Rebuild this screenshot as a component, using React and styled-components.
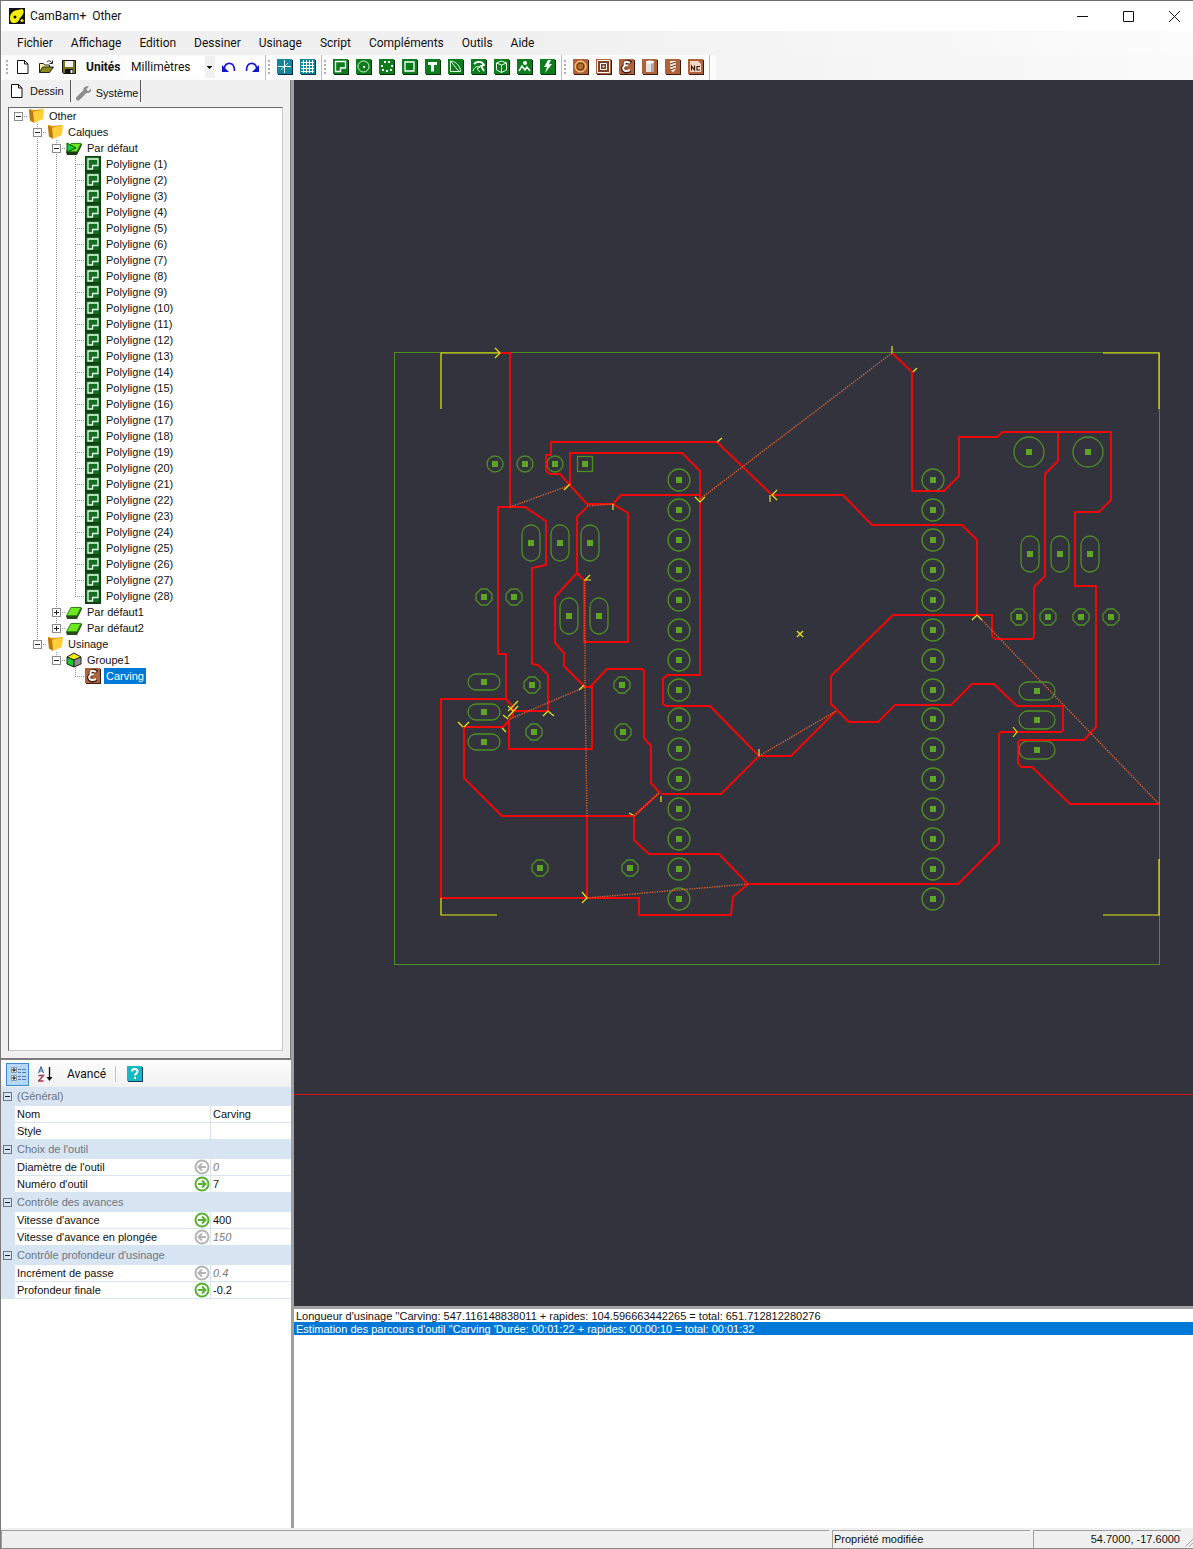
import { useState } from 'react';
import styled, { createGlobalStyle, css } from 'styled-components';

const MENU = ['Fichier', 'Affichage', 'Edition', 'Dessiner', 'Usinage', 'Script', 'Compléments', 'Outils', 'Aide'];

const VIEW_TOOLS = [
  { icon: 'axes', label: 'Axes' },
  { icon: 'grid', label: 'Grille' },
];

const DRAW_TOOLS = [
  { icon: 'polyline', label: 'Polyligne' },
  { icon: 'circle', label: 'Cercle' },
  { icon: 'points', label: 'Points' },
  { icon: 'rect', label: 'Rectangle' },
  { icon: 'text', label: 'Texte' },
  { icon: 'arc', label: 'Arc' },
  { icon: 'surface', label: 'Surface' },
  { icon: 'solid', label: 'Solide' },
  { icon: 'bitmap', label: 'Image' },
  { icon: 'script', label: 'Objet script' },
];

const CAM_TOOLS = [
  { icon: 'profile', label: 'Contour' },
  { icon: 'pocket', label: 'Poche' },
  { icon: 'engrave', label: 'Gravure' },
  { icon: 'lathe', label: 'Tour' },
  { icon: 'drill', label: 'Perçage' },
  { icon: 'nc', label: 'Fichier NC' },
];

// guides: one letter for each column, v = line, t = tee, l = elbow, h = stub, . = empty
const TREE = [
  { guides: 'h', open: true, icon: 'folder', label: 'Other' },
  { guides: '.t', open: true, icon: 'folder', label: 'Calques' },
  { guides: '.vt', open: true, icon: 'layerActive', label: 'Par défaut' },
  ...Array.from({ length: 28 }, (_, i) => ({
    guides: i === 27 ? '.vvl' : '.vvt',
    icon: 'polyTree',
    label: `Polyligne (${i + 1})`,
  })),
  { guides: '.vt', open: false, icon: 'layer', label: 'Par défaut1' },
  { guides: '.vl', open: false, icon: 'layer', label: 'Par défaut2' },
  { guides: '.l', open: true, icon: 'folder', label: 'Usinage' },
  { guides: '..l', open: true, icon: 'part', label: 'Groupe1' },
  { guides: '...l', icon: 'engrave', label: 'Carving' },
];

const PROPERTIES = [
  {
    title: '(Général)',
    rows: [
      { id: 'nom', name: 'Nom', value: 'Carving' },
      { id: 'style', name: 'Style', value: '' },
    ],
  },
  {
    title: "Choix de l'outil",
    rows: [
      { id: 'diametre', name: "Diamètre de l'outil", value: '0', state: 'default' },
      { id: 'numero', name: "Numéro d'outil", value: '7', state: 'set' },
    ],
  },
  {
    title: 'Contrôle des avances',
    rows: [
      { id: 'avance', name: "Vitesse d'avance", value: '400', state: 'set' },
      { id: 'plongee', name: "Vitesse d'avance en plongée", value: '150', state: 'default' },
    ],
  },
  {
    title: "Contrôle profondeur d'usinage",
    rows: [
      { id: 'increment', name: 'Incrément de passe', value: '0.4', state: 'default' },
      { id: 'profondeur', name: 'Profondeur finale', value: '-0.2', state: 'set' },
    ],
  },
];

const LOG = [
  "Longueur d'usinage ''Carving: 547.116148838011 + rapides: 104.596663442265 = total: 651.712812280276",
  "Estimation des parcours d'outil ''Carving 'Durée: 00:01:22 + rapides: 00:00:10 = total: 00:01:32",
];

const TRACES = [
  '499,353 510,353 510,507',
  '513,711 548,711 548,675 538,665 532,664 532,568 546,565 546,521 525,507 498,507 498,654 506,654 506,699 513,707 513,716 503,727 464,727 464,778 502,816 634,816 659,793',
  '506,699 441,699 441,898 639,898 639,915 731,915 733,897 748,884 958,884 999,843 999,734 1001,732 1061,732 1063,730 1063,706 1017,706 994,684 972,684 951,705 895,705 878,722 849,722 831,704 831,676 893,615 992,615 992,636 995,639 1032,639 1034,637 1034,587 1045,576 1045,474 1058,461 1058,432',
  '748,884 719,854 649,854 634,840 634,816',
  '661,794 721,794 759,756 791,756 836,711',
  '509,720 509,749 592,749 592,687 585,687 564,666 564,653 555,643 555,597 577,573 577,517 587,507',
  '590,687 607,669 642,669 644,671 644,738 651,746 651,783 660,793',
  '577,573 584,580 584,642 628,642 628,513 613,504 587,504',
  '613,504 621,495 700,495',
  '587,504 560,474 550,474 546,471 546,455 551,455 551,442 717,442 772,495 843,495 872,525 962,525 977,540 977,615',
  '570,486 570,453 682,453 700,471 700,675 667,675 663,679 663,704 666,706 710,706 759,756',
  '587,816 587,898',
  '892,353 912,372 912,491 944,491 959,476 959,437 997,437 1003,432 1111,432 1111,500 1099,512 1075,512 1075,586 1096,586 1096,727 1084,740 1020,740 1018,742 1018,763 1021,767 1032,767 1070,804 1159,804',
];

const RAPIDS = [
  '510,507 568,486',
  '587,506 613,504',
  '700,499 892,353',
  '585,580 585,687 587,816',
  '510,719 585,687',
  '759,756 836,711',
  '977,615 1159,804',
  '587,898 748,884',
  '634,816 659,793',
];

const ARROWS = [
  '495,348 500,353 495,358',
  '717,442 722,438',
  '892,346 892,353',
  '913,372 917,368',
  '564,490 570,484',
  '695,497 700,502 705,497',
  '613,504 613,510',
  '590,575 585,580 591,580',
  '770,495 770,502',
  '777,490 772,495 777,500',
  '797,631 803,637',
  '797,637 803,631',
  '759,749 759,756',
  '972,620 977,615 982,620',
  '1013,727 1017,732 1013,737',
  '579,690 584,685',
  '458,722 463,727',
  '464,727 469,722',
  '502,728 506,732',
  '503,715 508,719',
  '518,701 508,711',
  '518,706 508,717',
  '508,706 513,711',
  '543,716 548,711 554,716',
  '629,813 633,815',
  '661,796 661,802',
  '582,892 587,898 582,903',
];

const CORNERS = ['441,409 441,353 499,353', '1103,353 1159,353 1159,409', '1159,859 1159,915 1103,915', '441,898 441,915 497,915'];

const PIN_ROWS = [480, 510, 540, 570, 600, 630, 660, 690, 719, 749, 779, 809, 839, 869, 899];

const PADS = [
  ...PIN_ROWS.flatMap((y) => [[679, y, 22, 22], [933, y, 22, 22]]),
  [1029, 452, 30, 30], [1088, 452, 30, 30],
  [495, 464, 16, 16], [525, 464, 16, 16], [555, 464, 16, 16],
  [531, 543, 18, 36], [560, 543, 18, 36], [590, 543, 18, 36],
  [569, 616, 18, 36], [599, 616, 18, 36],
  [1030, 554, 18, 36], [1060, 554, 18, 36], [1090, 554, 18, 36],
  [484, 682, 32, 16], [484, 712, 32, 16], [484, 742, 32, 16],
  [1037, 691, 36, 18], [1037, 720, 36, 18], [1037, 750, 36, 18],
];

const OCTAGONS = [
  [484, 597], [514, 597], [532, 685], [622, 685], [534, 732], [623, 732],
  [540, 868], [630, 868], [1019, 617], [1048, 617], [1081, 617], [1111, 617],
];

const green = (
  <>
    <path d="M1 1h15v15H1z" fill="#062e0c" />
    <path d="M0 0h15v15H0z" fill="#0d7c1c" />
  </>
);

const copper = (
  <>
    <path d="M1 1h15v15H1z" fill="#3b1a10" />
    <path d="M0 0h15v15H0z" fill="#b0623a" />
  </>
);

const teal = (
  <>
    <path d="M1 1h15v15H1z" fill="#0b2a4c" />
    <path d="M0 0h15v15H0z" fill="#11859b" />
  </>
);

const ICONS = {
  app: (
    <>
      <path d="M0 0h16v16H0z" fill="#111" />
      <path d="M1 10C1 6 4 2 9 2l4-1c2 1 2 3 1 5-1 2-2 3-3 4-1 3-3 5-6 5s-4-2-4-5z" fill="#f4ee00" />
      <circle cx="6" cy="9" r="1.5" fill="#111" />
      <circle cx="13" cy="12.500" r="1.500" fill="#f4ee00" />
    </>
  ),
  page: <path d="M2.500 1.500h7l3.500 3.500v9.500H2.500zM9.500 1.500v3.500h3.500" fill="#fff" stroke="#111" />,
  open: (
    <>
      <path d="M1.500 13.500v-9h4l1 1.500h5v2" fill="#ffffb0" stroke="#222" />
      <path d="M1.500 13.500l3-5.500h11l-4 5.500z" fill="#8a8a1c" stroke="#222" />
      <path d="M9 3c2-2 4-1 5 1m.5-2.500v3h-3" fill="none" stroke="#222" />
    </>
  ),
  save: (
    <>
      <path d="M1.500 1.500h13v13h-12l-1-1z" fill="#77771a" stroke="#111" />
      <path d="M4 2h8v6H4z" fill="#f0f0f0" />
      <path d="M4 10h8v4.500H4z" fill="#111" />
      <path d="M9.500 11h2v3h-2z" fill="#f0f0f0" />
    </>
  ),
  undo: (
    <>
      <path d="M3 10c1-5 4-6 6.500-5.500 3 .5 4 3 4 7.500" fill="none" stroke="#1414c8" strokeWidth="1.600" />
      <path d="M1 6v7h7z" fill="#1414c8" />
    </>
  ),
  redo: (
    <>
      <path d="M13 10c-1-5-4-6-6.500-5.500-3 .5-4 3-4 7.500" fill="none" stroke="#1414c8" strokeWidth="1.600" />
      <path d="M15 6v7H8z" fill="#1414c8" />
    </>
  ),
  axes: (
    <>
      {teal}
      <path d="M7.500 1v13M1 7.500h13" stroke="#fff" />
      <path d="M4 11l7-7" stroke="#9fe6f0" />
    </>
  ),
  grid: (
    <>
      {teal}
      <path d="M3.500 1v13M6.500 1v13M9.500 1v13M12.500 1v13M1 3.500h13M1 6.500h13M1 9.500h13M1 12.500h13" stroke="#fff" />
    </>
  ),
  polyline: (
    <>
      {green}
      <path d="M2.500 2.500h10v6.500h-5v3.500h-5z" fill="none" stroke="#fff" strokeWidth="1.300" />
    </>
  ),
  polyTree: (
    <>
      <path d="M0 0h16v16H0z" fill="#0c4416" />
      <path d="M1 1h13v13H1z" fill="#146e22" />
      <path d="M3 3h10v6.500H7.500V13H3z" fill="none" stroke="#eaffea" strokeWidth="1.300" />
    </>
  ),
  circle: (
    <>
      {green}
      <circle cx="7.500" cy="7.500" r="5.500" fill="none" stroke="#d8f5d8" />
      <path d="M7 7h2v2H7z" fill="#fff" />
    </>
  ),
  points: (
    <>
      {green}
      <path d="M5 2h2v2H5zM9 2h2v2H9zM2 6h2v2H2zM12 6h2v2h-2zM3 10h2v2H3zM7 11h2v2H7zM11 10h2v2h-2z" fill="#fff" />
    </>
  ),
  rect: (
    <>
      {green}
      <path d="M3 3h9v9H3z" fill="none" stroke="#fff" strokeWidth="1.300" />
    </>
  ),
  text: (
    <>
      {green}
      <path d="M3 3h9v3H9v6.500H6V6H3z" fill="#fff" />
    </>
  ),
  arc: (
    <>
      {green}
      <path d="M2.500 2v10.500h10c0-5-4-10-10-10.500l8 10" fill="none" stroke="#d8f5d8" />
    </>
  ),
  surface: (
    <>
      {green}
      <path d="M3 5c3-3 8-3 10 1l-3 1 3 5" fill="none" stroke="#fff" strokeWidth="1.800" />
      <path d="M2 12c1-4 4-5 7-4l-3 2 3 3" fill="none" stroke="#fff" />
    </>
  ),
  solid: (
    <>
      {green}
      <path d="M2.500 4l5-2 5 2v7l-5 2.500-5-2.500zM2.500 4l5 2 5-2M7.500 6v7.500" fill="none" stroke="#e8ffe8" />
    </>
  ),
  bitmap: (
    <>
      {green}
      <circle cx="8" cy="4" r="2" fill="#fff" />
      <path d="M2 12l3-5 3 4 2-3 3 4" fill="none" stroke="#fff" strokeWidth="1.500" />
    </>
  ),
  script: (
    <>
      {green}
      <path d="M8 1h3L9 5h3l-7 9 2-6H4z" fill="#fff" />
    </>
  ),
  profile: (
    <>
      {copper}
      <circle cx="7.500" cy="7.500" r="5.500" fill="#d9821c" stroke="#ffe2a8" />
      <circle cx="7.500" cy="7.500" r="3.500" fill="#b0703a" stroke="#5c2a12" />
    </>
  ),
  pocket: (
    <>
      {copper}
      <path d="M1.500 1.500h12v12h-12zM4.500 4.500h6v6h-6zM7 7h1v1H7z" fill="#7a4228" stroke="#fff" />
    </>
  ),
  engrave: (
    <>
      {copper}
      <path d="M12 4C9 1 4 3 6 6.500h3H6C1 9 5 15 11.500 11.500" fill="none" stroke="#3b1a10" strokeWidth="3.500" />
      <path d="M11 4C8 1.500 4 3 6 6.500h3H6C2 9 5 14 11 11" fill="none" stroke="#fff" strokeWidth="2" />
    </>
  ),
  lathe: (
    <>
      {copper}
      <path d="M4 3h8v10H4z" fill="#e4e4e4" />
      <path d="M9 3h3v10H9z" fill="#a8a8a8" />
      <ellipse cx="8" cy="3" rx="4" ry="1.500" fill="#fff" />
    </>
  ),
  drill: (
    <>
      {copper}
      <path d="M5 2h6v8l-3 3.500L5 10z" fill="#f0e4dc" />
      <path d="M5 5l6-2M5 8l6-2M5 11l6-2" stroke="#7a3a20" />
    </>
  ),
  nc: (
    <>
      {copper}
      <path d="M2 2h8l3 3v8H2z" fill="#f2d8c8" />
      <path d="M3.500 11.500V7l3 4V6.500M12 7.500H9v3.500h3" fill="none" stroke="#3b1a10" strokeWidth="1.200" />
    </>
  ),
  wrench: (
    <path
      d="M14 1.500l-2.500 2.500.5 1.500 1.500.5L16 3.500c.5 3-1.500 5-4.500 4.500l-7 7c-1 1-2.500.5-3 0s-1-2 0-3l7-7C8 2.500 10.500.5 14 1.500z"
      fill="#8d8d8d"
    />
  ),
  folder: (
    <>
      <path d="M1 1l5 1 9-1v9l-9 4-4-1z" fill="#e49a10" />
      <path d="M5 4l11-3-1 10-9 4z" fill="#ffcf3a" />
      <path d="M1 1l4 3 1 11-4-3z" fill="#b87a10" />
    </>
  ),
  layer: (
    <>
      <path d="M0 12l1 3h10l5-10-1-2z" fill="#2a4a1c" />
      <path d="M.5 11.500L5 3.500h10l-4 8z" fill="#6ce81c" stroke="#2f8a12" />
    </>
  ),
  layerActive: (
    <>
      <path d="M0 12l1 3h10l5-10-1-2z" fill="#1a3a14" />
      <path d="M.5 11.500L5 3.500h10l-4 8z" fill="#6ce81c" stroke="#2f8a12" />
      <path d="M1 3l9 5-9 4z" fill="#18d038" stroke="#064a10" />
    </>
  ),
  part: (
    <>
      <path d="M1 5l7-4 7 4-7 3z" fill="#f2ea10" stroke="#222" />
      <path d="M1 5v7l7 3V8z" fill="#18c830" stroke="#222" />
      <path d="M15 5v7l-7 3V8z" fill="#8c8c8c" stroke="#222" />
    </>
  ),
  categories: (
    <>
      <path d="M1.500 1.500h5v5h-5zM1.500 9.500h5v5h-5z" fill="#fff" stroke="#8a96a4" />
      <path d="M2 4h4M4 2v4M2 12h4M4 10v4" stroke="#111" />
      <path d="M8 3.500h3M12 3.500h4M8 6.500h3M12 6.500h4M8 10.500h3M12 10.500h4M8 13.500h3M12 13.500h4" stroke="#5a78b0" />
    </>
  ),
  sort: (
    <>
      <path d="M.5 7L3 1l2.500 6M1.500 5h3" fill="none" stroke="#3a6a9a" strokeWidth="1.200" />
      <path d="M.5 9.500h5l-5 5.500h5" fill="none" stroke="#a03a4a" strokeWidth="1.300" />
      <path d="M11.500 1v12" stroke="#111" strokeWidth="1.300" />
      <path d="M8.500 11h6l-3 4z" fill="#111" />
    </>
  ),
  help: (
    <>
      <path d="M1 1h15v15H1z" fill="#123a6a" />
      <path d="M0 0h15v15H0z" fill="#16b8c4" />
      <path d="M5 5.500c0-3.500 5.500-3.500 5.500 0 0 2-2.500 2-2.500 4" fill="none" stroke="#fff" strokeWidth="2" />
      <path d="M7 11h2v2H7z" fill="#fff" />
    </>
  ),
};

function Icon({ name }) {
  return (
    <IconSvg viewBox="0 0 16 16" aria-hidden="true">
      {ICONS[name]}
    </IconSvg>
  );
}

function StateIcon({ state }) {
  const color = state === 'set' ? '#55b030' : '#b4b4b4';
  return (
    <IconSvg viewBox="0 0 16 16" aria-hidden="true">
      <circle cx="8" cy="8" r="6.500" fill="#fff" stroke={color} strokeWidth="2" />
      <path
        d={state === 'set' ? 'M4 8h6M8 4.500L11.500 8 8 11.500' : 'M12 8H6M8 4.500L4.500 8 8 11.500'}
        fill="none"
        stroke={color}
        strokeWidth="2"
      />
    </IconSvg>
  );
}

function ToolGroup({ tools }) {
  return (
    <Group>
      <Grip />
      {tools.map((t) => (
        <ToolButton key={t.icon} aria-label={t.label}>
          <Icon name={t.icon} />
        </ToolButton>
      ))}
    </Group>
  );
}

function Drawing() {
  return (
    <Canvas viewBox="294 80 899 1226" preserveAspectRatio="xMidYMid meet" role="img" aria-label="Vue du dessin">
      <path d="M-2000 1094.500h6000" stroke="#d81414" />
      <rect x="394.500" y="352.500" width="765" height="612" fill="none" stroke="#4f8f22" />
      <g fill="none" stroke="#4f8f22" strokeWidth="1.300">
        {PADS.map(([x, y, w, h]) => (
          <rect key={`${x}-${y}`} x={x - w / 2} y={y - h / 2} width={w} height={h} rx={Math.min(w, h) / 2} />
        ))}
        <rect x="577.500" y="456.500" width="15" height="15" />
        {OCTAGONS.map(([x, y]) => (
          <path key={`${x}-${y}`} d={`M${x - 3} ${y - 8}h6l5 5v6l-5 5h-6l-5-5v-6z`} />
        ))}
      </g>
      <g fill="#5ca624">
        {[...PADS, ...OCTAGONS, [585, 464]].map(([x, y]) => (
          <rect key={`${x}-${y}`} x={x - 3} y={y - 3} width="6" height="6" />
        ))}
      </g>
      <g fill="none" stroke="#f00808" strokeWidth="2" strokeLinejoin="round">
        {TRACES.map((points) => (
          <polyline key={points} points={points} />
        ))}
      </g>
      <g fill="none" stroke="#f0642c" strokeWidth="1.300" strokeDasharray="1.300 1.200">
        {RAPIDS.map((points) => (
          <polyline key={points} points={points} />
        ))}
      </g>
      <g fill="none" stroke="#e6e614" strokeWidth="1.200">
        {[...ARROWS, ...CORNERS].map((points) => (
          <polyline key={points} points={points} />
        ))}
      </g>
    </Canvas>
  );
}

export default function App() {
  const [selected, setSelected] = useState('Carving');

  return (
    <Window>
      <GlobalStyle />
      <TitleBar>
        <Icon name="app" />
        <Title>CamBam+&nbsp; Other</Title>
        <CaptionButton aria-label="Réduire">
          <CaptionSvg viewBox="0 0 11 11"><path d="M0 5.500h11" /></CaptionSvg>
        </CaptionButton>
        <CaptionButton aria-label="Agrandir">
          <CaptionSvg viewBox="0 0 11 11"><path d="M.5.500h10v10H.500z" /></CaptionSvg>
        </CaptionButton>
        <CaptionButton aria-label="Fermer">
          <CaptionSvg viewBox="0 0 11 11"><path d="M0 0l11 11M11 0L0 11" /></CaptionSvg>
        </CaptionButton>
      </TitleBar>

      <MenuBar>
        {MENU.map((m) => (
          <MenuButton key={m}>{m}</MenuButton>
        ))}
      </MenuBar>

      <Toolbar>
        <Group>
          <Grip />
          <ToolButton aria-label="Nouveau"><Icon name="page" /></ToolButton>
          <ToolButton aria-label="Ouvrir"><Icon name="open" /></ToolButton>
          <ToolButton aria-label="Enregistrer"><Icon name="save" /></ToolButton>
          <UnitLabel htmlFor="units">Unités</UnitLabel>
          <UnitSelect id="units" defaultValue="mm">
            <option value="mm">Millimètres</option>
            <option value="in">Pouces</option>
          </UnitSelect>
          <ToolButton aria-label="Annuler"><Icon name="undo" /></ToolButton>
          <ToolButton aria-label="Rétablir"><Icon name="redo" /></ToolButton>
        </Group>
        <ToolGroup tools={VIEW_TOOLS} />
        <ToolGroup tools={DRAW_TOOLS} />
        <ToolGroup tools={CAM_TOOLS} />
      </Toolbar>

      <Main>
        <Sidebar>
          <TreePanel>
            <Tabs role="tablist">
              <Tab role="tab" aria-selected="true"><Icon name="page" />Dessin</Tab>
              <Tab role="tab" aria-selected="false" $lowered><Icon name="wrench" />Système</Tab>
            </Tabs>
            <Tree role="tree">
              {TREE.map((node) => (
                <TreeRow key={node.label} role="treeitem" onClick={() => setSelected(node.label)}>
                  {[...node.guides].map((g, i) => (
                    <Guide key={i} $kind={g}>
                      {i === node.guides.length - 1 && node.open !== undefined && (
                        <Toggle aria-label={`Déplier ${node.label}`} $open={node.open} />
                      )}
                    </Guide>
                  ))}
                  <Icon name={node.icon} />
                  <TreeLabel $selected={selected === node.label}>{node.label}</TreeLabel>
                </TreeRow>
              ))}
            </Tree>
          </TreePanel>

          <PropertyPanel>
            <PropertyToolbar>
              <SortButton aria-label="Par catégorie" $active><Icon name="categories" /></SortButton>
              <SortButton aria-label="Alphabétique"><Icon name="sort" /></SortButton>
              <AdvancedButton>Avancé</AdvancedButton>
              <HelpButton aria-label="Aide"><Icon name="help" /></HelpButton>
            </PropertyToolbar>
            <PropertyTable>
              <colgroup>
                <GutterCol />
                <col />
                <ValueCol />
              </colgroup>
              {PROPERTIES.map((cat) => (
                <tbody key={cat.title}>
                  <tr>
                    <CategoryCell><Toggle aria-label={`Replier ${cat.title}`} $open $clear /></CategoryCell>
                    <CategoryCell as="th" colSpan={2}>{cat.title}</CategoryCell>
                  </tr>
                  {cat.rows.map((row) => (
                    <tr key={row.id}>
                      <GutterCell />
                      <NameCell>
                        <NameBox>
                          <label htmlFor={row.id}>{row.name}</label>
                          {row.state && <StateIcon state={row.state} />}
                        </NameBox>
                      </NameCell>
                      <ValueCell>
                        <ValueInput id={row.id} defaultValue={row.value} $inherited={row.state === 'default'} />
                      </ValueCell>
                    </tr>
                  ))}
                </tbody>
              ))}
            </PropertyTable>
          </PropertyPanel>
        </Sidebar>

        <Workspace>
          <Drawing />
          <Log>
            {LOG.map((line, i) => (
              <LogLine key={line} $selected={i === 1}>{line}</LogLine>
            ))}
          </Log>
        </Workspace>
      </Main>

      <StatusBar>
        <StatusCell />
        <StatusCell $width={198}>Propriété modifiée</StatusCell>
        <StatusCell $width={148} $right>54.7000, -17.6000</StatusCell>
        <GripSvg viewBox="0 0 12 12" aria-hidden="true">
          <path d="M2 12L12 2M7 12l5-5" stroke="#8a8a8a" />
        </GripSvg>
      </StatusBar>
    </Window>
  );
}

const GlobalStyle = createGlobalStyle`
  * {
    box-sizing: border-box;
  }
  body {
    margin: 0;
    background: #f0f0f0;
    color: #111;
    font: 11px/16px 'Liberation Sans', Arial, sans-serif;
  }
  button, input, select {
    margin: 0;
    padding: 0;
    border: 0;
    background: none;
    color: inherit;
    font: inherit;
  }
`;

const uiFont = css`
  font-family: Roboto, 'Open Sans', sans-serif;
  font-size: 12px;
`;

const Window = styled.div`
  display: flex;
  flex-direction: column;
  height: 100vh;
  min-height: 900px;
  overflow: hidden;
  border-top: 1px solid #6e6e6e;
  border-left: 1px solid #7a7a7a;
`;

const IconSvg = styled.svg`
  width: 16px;
  height: 16px;
  flex: none;
`;

const TitleBar = styled.header`
  display: flex;
  align-items: center;
  height: 30px;
  padding-left: 8px;
  background: #fff;
`;

const Title = styled.h1`
  ${uiFont}
  flex: 1;
  margin: 0 0 0 5px;
  font-weight: 400;
`;

const CaptionButton = styled.button`
  display: flex;
  align-items: center;
  justify-content: center;
  width: 46px;
  height: 28px;
  &:last-child {
    margin-right: -4px;
  }
`;

const CaptionSvg = styled.svg`
  width: 11px;
  height: 11px;
  fill: none;
  stroke: #111;
`;

const MenuBar = styled.nav`
  display: flex;
  height: 24px;
  padding: 0 7px;
  background: linear-gradient(to right, #f0f0f0, #f0f0f0 45%, #fcfcfc);
`;

const MenuButton = styled.button`
  ${uiFont}
  padding: 0 9px;
`;

const Toolbar = styled.div`
  display: flex;
  height: 25px;
  padding-left: 3px;
  background: linear-gradient(to right, #fcfcfc, #fcfcfc 60%, #f3f3f3 60%, #fafafa);
`;

const Group = styled.div`
  display: flex;
  align-items: center;
  padding: 0 2px 2px 7px;
  border-right: 1px solid #bdbdbd;
  position: relative;
`;

const Grip = styled.span`
  position: absolute;
  left: 2px;
  top: 5px;
  width: 2px;
  height: 15px;
  background: repeating-linear-gradient(#b0b0b0 0 2px, transparent 2px 4px);
`;

const ToolButton = styled.button`
  display: flex;
  align-items: center;
  justify-content: center;
  width: 23px;
  height: 23px;
`;

const UnitLabel = styled.label`
  ${uiFont}
  width: 47px;
  padding-left: 6px;
  font-weight: 700;
`;

const UnitSelect = styled.select`
  ${uiFont}
  width: 88px;
  height: 22px;
  margin-right: 2px;
  padding-left: 4px;
  appearance: none;
  background:
    linear-gradient(#111, #111) 80px 10px / 5px 1px no-repeat,
    linear-gradient(#111, #111) 81px 11px / 3px 1px no-repeat,
    linear-gradient(#111, #111) 82px 12px / 1px 1px no-repeat,
    linear-gradient(#f0f0f0, #f0f0f0) right / 10px 100% no-repeat,
    #fff;
`;

const Main = styled.main`
  display: flex;
  flex: 1;
  min-height: 0;
`;

const Sidebar = styled.aside`
  display: flex;
  flex-direction: column;
  width: 293px;
  flex: none;
  border-right: 3px solid #a0a0a0;
`;

const TreePanel = styled.section`
  display: flex;
  flex-direction: column;
  flex: 1;
  min-height: 0;
  padding: 0 7px 7px;
  border-right: 1px solid #7c7c7c;
  border-bottom: 2px solid #7c7c7c;
`;

const Tabs = styled.div`
  display: flex;
  height: 27px;
`;

const Tab = styled.button`
  display: flex;
  align-items: center;
  gap: 5px;
  height: 22px;
  padding: ${(p) => (p.$lowered ? '4px 2px 0 4px' : '0 6px 0 1px')};
  border-right: 1px solid #5c5c5c;
`;

const Tree = styled.div`
  flex: 1;
  min-height: 0;
  overflow: hidden;
  border: 1px solid #c8c8c8;
  border-top-color: #696969;
  border-left-color: #696969;
  background: #fff;
`;

const TreeRow = styled.div`
  display: flex;
  align-items: center;
  height: 16px;
`;

const dotsV = 'repeating-linear-gradient(#8c8c8c 0 1px, transparent 1px 2px)';
const dotsH = 'repeating-linear-gradient(to right, #8c8c8c 0 1px, transparent 1px 2px)';

const guides = {
  v: `${dotsV} 9px 0 / 1px 16px no-repeat`,
  h: `${dotsH} 9px 8px / 10px 1px no-repeat`,
  t: `${dotsV} 9px 0 / 1px 16px no-repeat, ${dotsH} 9px 8px / 10px 1px no-repeat`,
  l: `${dotsV} 9px 0 / 1px 8px no-repeat, ${dotsH} 9px 8px / 10px 1px no-repeat`,
};

const Guide = styled.span`
  display: flex;
  align-items: center;
  padding-left: 5px;
  width: 19px;
  height: 16px;
  flex: none;
  background: ${(p) => guides[p.$kind] || 'none'};
`;

const Toggle = styled.button`
  display: block;
  width: 9px;
  height: 9px;
  border: 1px solid ${(p) => (p.$clear ? '#6d7683' : '#8c8c8c')};
  background:
    linear-gradient(#222, #222) center / 5px 1px no-repeat,
    ${(p) => !p.$open && 'linear-gradient(#222, #222) center / 1px 5px no-repeat,'}
    ${(p) => (p.$clear ? 'transparent' : '#fff')};
`;

const TreeLabel = styled.span`
  margin-left: 3px;
  padding: 0 2px;
  white-space: nowrap;
  ${(p) =>
    p.$selected &&
    css`
      background: #0078d7;
      color: #fff;
    `}
`;

const PropertyPanel = styled.section`
  height: 468px;
  background: #fff;
`;

const PropertyToolbar = styled.div`
  display: flex;
  align-items: center;
  height: 27px;
  padding: 1px 5px 0;
  background: linear-gradient(#fdfdfd, #f1f1f1);
`;

const SortButton = styled.button`
  display: flex;
  align-items: center;
  justify-content: center;
  width: 23px;
  height: 23px;
  margin-right: 5px;
  border: 1px solid ${(p) => (p.$active ? '#3a8ad0' : 'transparent')};
  background: ${(p) => (p.$active ? '#b3d7f5' : 'none')};
`;

const AdvancedButton = styled.button`
  ${uiFont}
  padding: 0 9px 0 5px;
  border-right: 1px solid #c4c4c4;
`;

const HelpButton = styled.button`
  display: flex;
  padding-left: 11px;
`;

const PropertyTable = styled.table`
  width: 100%;
  table-layout: fixed;
  border-collapse: separate;
  border-spacing: 0;
  line-height: 16px;
  td, th {
    padding: 0;
  }
`;

const GutterCol = styled.col`
  width: 14px;
`;

const ValueCol = styled.col`
  width: 81px;
`;

const CategoryCell = styled.td`
  height: 19px;
  background: #d7e4f2;
  color: #6d7683;
  font-weight: 400;
  text-align: left;
  && {
    padding: 0 0 1px 2px;
  }
`;

const GutterCell = styled.td`
  background: #d7e4f2;
`;

const NameCell = styled.td`
  height: 17px;
  border-bottom: 1px solid #d7e4f2;
  && {
    padding-left: 2px;
  }
`;

const NameBox = styled.div`
  display: flex;
  justify-content: space-between;
  height: 16px;
`;

const ValueCell = styled.td`
  border-bottom: 1px solid #d7e4f2;
  border-left: 1px solid #d7e4f2;
`;

const ValueInput = styled.input`
  display: block;
  width: 100%;
  height: 16px;
  padding-left: 2px;
  ${(p) =>
    p.$inherited &&
    css`
      color: #7a7a7a;
      font-style: italic;
    `}
`;

const Workspace = styled.section`
  display: flex;
  flex-direction: column;
  flex: 1;
  min-width: 0;
`;

const Canvas = styled.svg`
  display: block;
  flex: 1;
  width: 100%;
  min-height: 0;
  background: #33333d;
`;

const Log = styled.ul`
  height: 222px;
  margin: 0;
  padding: 0;
  border-top: 3px solid #a0a0a0;
  background: #fff;
  list-style: none;
`;

const LogLine = styled.li`
  height: 13px;
  padding-left: 2px;
  line-height: 14px;
  white-space: nowrap;
  overflow: hidden;
  ${(p) =>
    p.$selected &&
    css`
      background: #0078d7;
      color: #fff;
    `}
`;

const StatusBar = styled.footer`
  display: flex;
  gap: 3px;
  height: 21px;
  padding-top: 2px;
  border-bottom: 1px solid #8a8a8a;
`;

const StatusCell = styled.div`
  flex: ${(p) => (p.$width ? `0 0 ${p.$width}px` : '1')};
  padding: 0 1px;
  border-top: 1px solid #a0a0a0;
  border-left: 1px solid #a0a0a0;
  text-align: ${(p) => (p.$right ? 'right' : 'left')};
`;

const GripSvg = styled.svg`
  align-self: flex-end;
  width: 9px;
  height: 12px;
`;
